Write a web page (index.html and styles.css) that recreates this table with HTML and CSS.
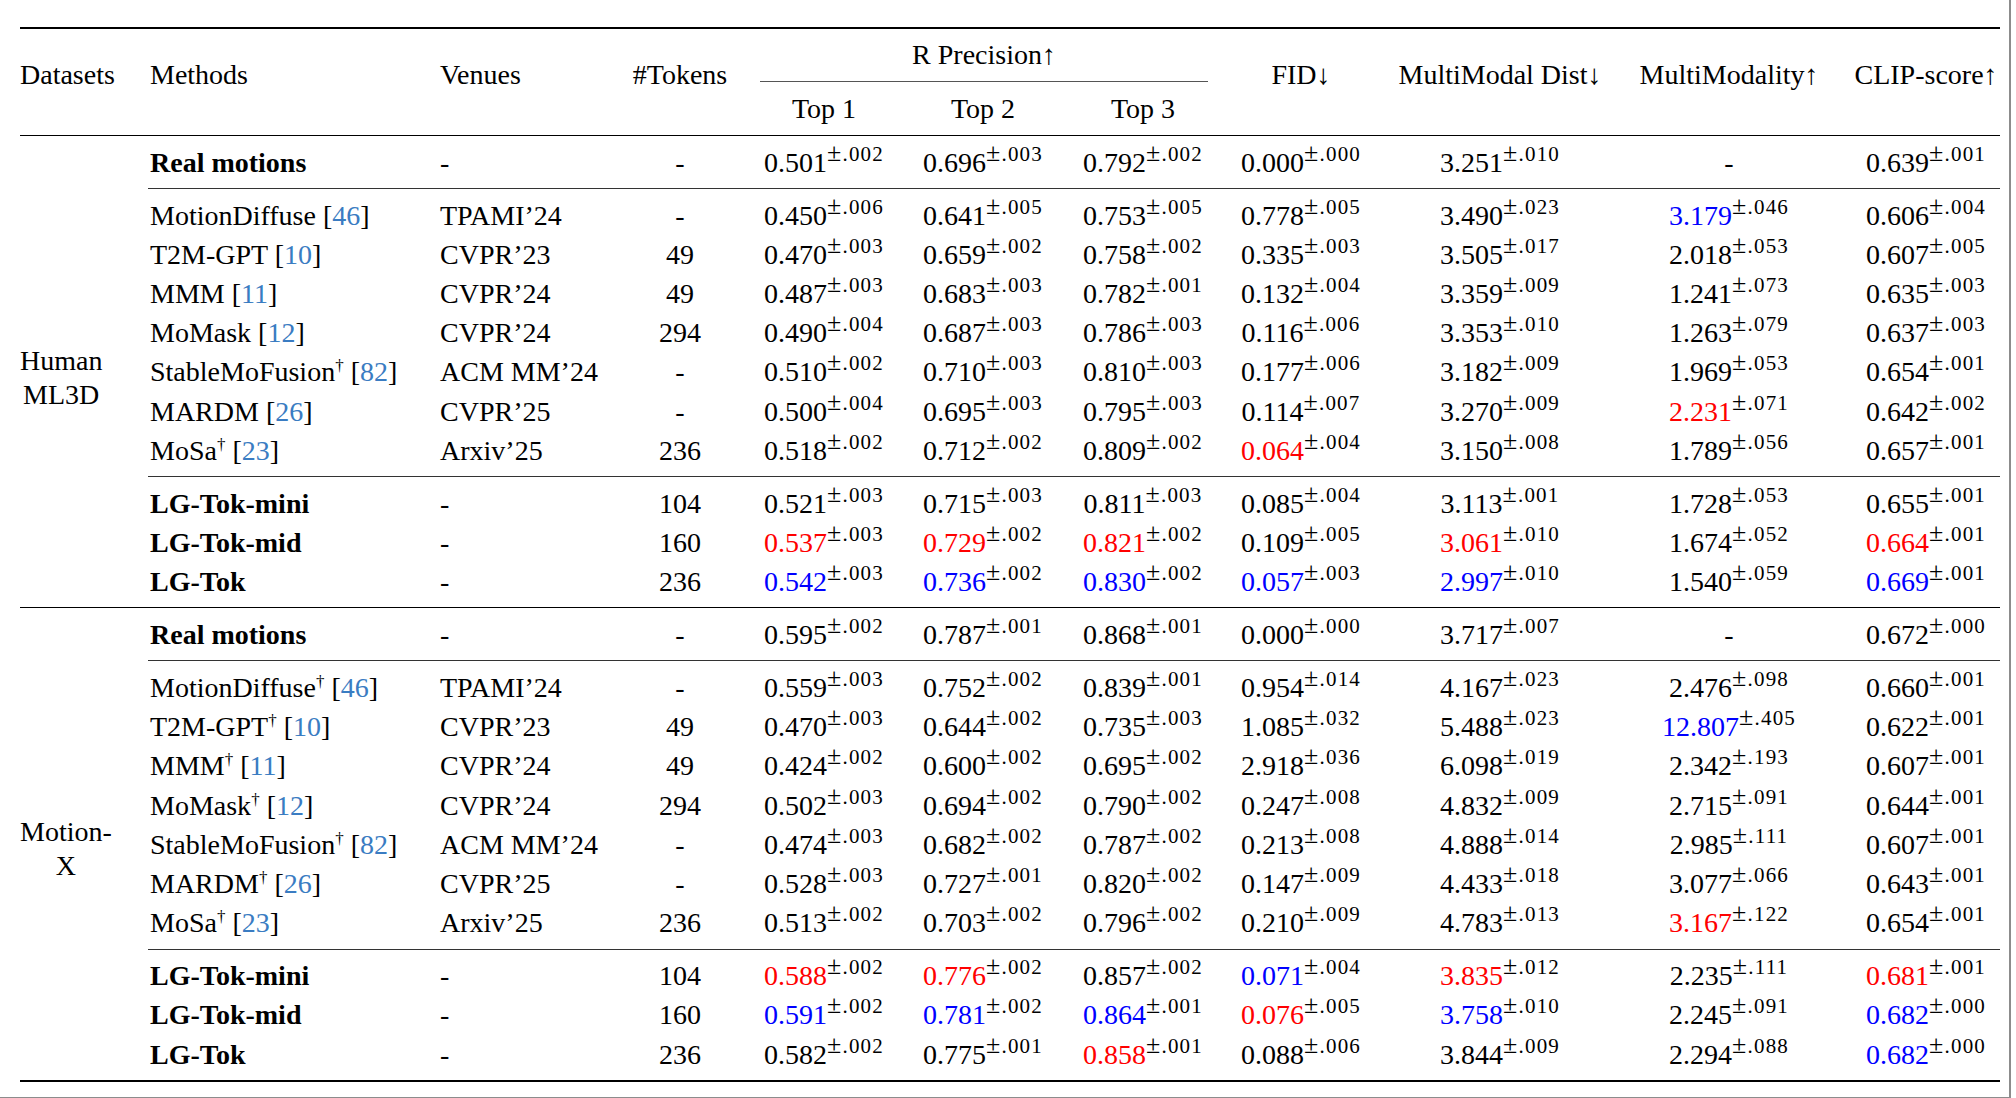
FILE: index.html
```html
<!DOCTYPE html>
<html lang="en">
<head>
<meta charset="utf-8">
<title>Results table</title>
<link rel="stylesheet" href="styles.css">
</head>
<body>
<div class="page">
<table class="tbl">
<colgroup>
<col class="w1"><col class="w2"><col class="w3"><col class="w4"><col class="w5"><col class="w6"><col class="w7"><col class="w8"><col class="w9"><col class="w10"><col class="w11">
</colgroup>
<thead>
<tr>
<th rowspan="2" class="hl">Datasets</th>
<th rowspan="2" class="hl pl">Methods</th>
<th rowspan="2" class="hl pl">Venues</th>
<th rowspan="2" class="hc">#Tokens</th>
<th colspan="3" class="grp"><div class="grp-label">R Precision↑</div></th>
<th rowspan="2" class="hc">FID↓</th>
<th rowspan="2" class="hc">MultiModal Dist↓</th>
<th rowspan="2" class="hc">MultiModality↑</th>
<th rowspan="2" class="hc">CLIP-score↑</th>
</tr>
<tr>
<th class="sub">Top 1</th><th class="sub">Top 2</th><th class="sub">Top 3</th>
</tr>
</thead>
<tbody>
<tr class="first last rule"><td rowspan="11" class="ds"><div class="dsn">Human<br>ML3D</div></td><td class="m bold">Real motions</td><td class="m">-</td><td>-</td><td>0.501<sup><span class="pm">±</span>.002</sup></td><td>0.696<sup><span class="pm">±</span>.003</sup></td><td>0.792<sup><span class="pm">±</span>.002</sup></td><td>0.000<sup><span class="pm">±</span>.000</sup></td><td>3.251<sup><span class="pm">±</span>.010</sup></td><td>-</td><td>0.639<sup><span class="pm">±</span>.001</sup></td></tr>
<tr class="first"><td class="m">MotionDiffuse [<span class="cite">46</span>]</td><td class="m">TPAMI’24</td><td>-</td><td>0.450<sup><span class="pm">±</span>.006</sup></td><td>0.641<sup><span class="pm">±</span>.005</sup></td><td>0.753<sup><span class="pm">±</span>.005</sup></td><td>0.778<sup><span class="pm">±</span>.005</sup></td><td>3.490<sup><span class="pm">±</span>.023</sup></td><td><span class="b">3.179</span><sup><span class="pm">±</span>.046</sup></td><td>0.606<sup><span class="pm">±</span>.004</sup></td></tr>
<tr><td class="m">T2M-GPT [<span class="cite">10</span>]</td><td class="m">CVPR’23</td><td>49</td><td>0.470<sup><span class="pm">±</span>.003</sup></td><td>0.659<sup><span class="pm">±</span>.002</sup></td><td>0.758<sup><span class="pm">±</span>.002</sup></td><td>0.335<sup><span class="pm">±</span>.003</sup></td><td>3.505<sup><span class="pm">±</span>.017</sup></td><td>2.018<sup><span class="pm">±</span>.053</sup></td><td>0.607<sup><span class="pm">±</span>.005</sup></td></tr>
<tr><td class="m">MMM [<span class="cite">11</span>]</td><td class="m">CVPR’24</td><td>49</td><td>0.487<sup><span class="pm">±</span>.003</sup></td><td>0.683<sup><span class="pm">±</span>.003</sup></td><td>0.782<sup><span class="pm">±</span>.001</sup></td><td>0.132<sup><span class="pm">±</span>.004</sup></td><td>3.359<sup><span class="pm">±</span>.009</sup></td><td>1.241<sup><span class="pm">±</span>.073</sup></td><td>0.635<sup><span class="pm">±</span>.003</sup></td></tr>
<tr><td class="m">MoMask [<span class="cite">12</span>]</td><td class="m">CVPR’24</td><td>294</td><td>0.490<sup><span class="pm">±</span>.004</sup></td><td>0.687<sup><span class="pm">±</span>.003</sup></td><td>0.786<sup><span class="pm">±</span>.003</sup></td><td>0.116<sup><span class="pm">±</span>.006</sup></td><td>3.353<sup><span class="pm">±</span>.010</sup></td><td>1.263<sup><span class="pm">±</span>.079</sup></td><td>0.637<sup><span class="pm">±</span>.003</sup></td></tr>
<tr><td class="m">StableMoFusion<sup class="dg">†</sup> [<span class="cite">82</span>]</td><td class="m">ACM MM’24</td><td>-</td><td>0.510<sup><span class="pm">±</span>.002</sup></td><td>0.710<sup><span class="pm">±</span>.003</sup></td><td>0.810<sup><span class="pm">±</span>.003</sup></td><td>0.177<sup><span class="pm">±</span>.006</sup></td><td>3.182<sup><span class="pm">±</span>.009</sup></td><td>1.969<sup><span class="pm">±</span>.053</sup></td><td>0.654<sup><span class="pm">±</span>.001</sup></td></tr>
<tr><td class="m">MARDM [<span class="cite">26</span>]</td><td class="m">CVPR’25</td><td>-</td><td>0.500<sup><span class="pm">±</span>.004</sup></td><td>0.695<sup><span class="pm">±</span>.003</sup></td><td>0.795<sup><span class="pm">±</span>.003</sup></td><td>0.114<sup><span class="pm">±</span>.007</sup></td><td>3.270<sup><span class="pm">±</span>.009</sup></td><td><span class="r">2.231</span><sup><span class="pm">±</span>.071</sup></td><td>0.642<sup><span class="pm">±</span>.002</sup></td></tr>
<tr class="last rule"><td class="m">MoSa<sup class="dg">†</sup> [<span class="cite">23</span>]</td><td class="m">Arxiv’25</td><td>236</td><td>0.518<sup><span class="pm">±</span>.002</sup></td><td>0.712<sup><span class="pm">±</span>.002</sup></td><td>0.809<sup><span class="pm">±</span>.002</sup></td><td><span class="r">0.064</span><sup><span class="pm">±</span>.004</sup></td><td>3.150<sup><span class="pm">±</span>.008</sup></td><td>1.789<sup><span class="pm">±</span>.056</sup></td><td>0.657<sup><span class="pm">±</span>.001</sup></td></tr>
<tr class="first"><td class="m bold">LG-Tok-mini</td><td class="m">-</td><td>104</td><td>0.521<sup><span class="pm">±</span>.003</sup></td><td>0.715<sup><span class="pm">±</span>.003</sup></td><td>0.811<sup><span class="pm">±</span>.003</sup></td><td>0.085<sup><span class="pm">±</span>.004</sup></td><td>3.113<sup><span class="pm">±</span>.001</sup></td><td>1.728<sup><span class="pm">±</span>.053</sup></td><td>0.655<sup><span class="pm">±</span>.001</sup></td></tr>
<tr><td class="m bold">LG-Tok-mid</td><td class="m">-</td><td>160</td><td><span class="r">0.537</span><sup><span class="pm">±</span>.003</sup></td><td><span class="r">0.729</span><sup><span class="pm">±</span>.002</sup></td><td><span class="r">0.821</span><sup><span class="pm">±</span>.002</sup></td><td>0.109<sup><span class="pm">±</span>.005</sup></td><td><span class="r">3.061</span><sup><span class="pm">±</span>.010</sup></td><td>1.674<sup><span class="pm">±</span>.052</sup></td><td><span class="r">0.664</span><sup><span class="pm">±</span>.001</sup></td></tr>
<tr class="last bend"><td class="m bold">LG-Tok</td><td class="m">-</td><td>236</td><td><span class="b">0.542</span><sup><span class="pm">±</span>.003</sup></td><td><span class="b">0.736</span><sup><span class="pm">±</span>.002</sup></td><td><span class="b">0.830</span><sup><span class="pm">±</span>.002</sup></td><td><span class="b">0.057</span><sup><span class="pm">±</span>.003</sup></td><td><span class="b">2.997</span><sup><span class="pm">±</span>.010</sup></td><td>1.540<sup><span class="pm">±</span>.059</sup></td><td><span class="b">0.669</span><sup><span class="pm">±</span>.001</sup></td></tr>
</tbody>
<tbody class="final">
<tr class="first last rule"><td rowspan="11" class="ds"><div class="dsn">Motion-<br>X</div></td><td class="m bold">Real motions</td><td class="m">-</td><td>-</td><td>0.595<sup><span class="pm">±</span>.002</sup></td><td>0.787<sup><span class="pm">±</span>.001</sup></td><td>0.868<sup><span class="pm">±</span>.001</sup></td><td>0.000<sup><span class="pm">±</span>.000</sup></td><td>3.717<sup><span class="pm">±</span>.007</sup></td><td>-</td><td>0.672<sup><span class="pm">±</span>.000</sup></td></tr>
<tr class="first"><td class="m">MotionDiffuse<sup class="dg">†</sup> [<span class="cite">46</span>]</td><td class="m">TPAMI’24</td><td>-</td><td>0.559<sup><span class="pm">±</span>.003</sup></td><td>0.752<sup><span class="pm">±</span>.002</sup></td><td>0.839<sup><span class="pm">±</span>.001</sup></td><td>0.954<sup><span class="pm">±</span>.014</sup></td><td>4.167<sup><span class="pm">±</span>.023</sup></td><td>2.476<sup><span class="pm">±</span>.098</sup></td><td>0.660<sup><span class="pm">±</span>.001</sup></td></tr>
<tr><td class="m">T2M-GPT<sup class="dg">†</sup> [<span class="cite">10</span>]</td><td class="m">CVPR’23</td><td>49</td><td>0.470<sup><span class="pm">±</span>.003</sup></td><td>0.644<sup><span class="pm">±</span>.002</sup></td><td>0.735<sup><span class="pm">±</span>.003</sup></td><td>1.085<sup><span class="pm">±</span>.032</sup></td><td>5.488<sup><span class="pm">±</span>.023</sup></td><td><span class="b">12.807</span><sup><span class="pm">±</span>.405</sup></td><td>0.622<sup><span class="pm">±</span>.001</sup></td></tr>
<tr><td class="m">MMM<sup class="dg">†</sup> [<span class="cite">11</span>]</td><td class="m">CVPR’24</td><td>49</td><td>0.424<sup><span class="pm">±</span>.002</sup></td><td>0.600<sup><span class="pm">±</span>.002</sup></td><td>0.695<sup><span class="pm">±</span>.002</sup></td><td>2.918<sup><span class="pm">±</span>.036</sup></td><td>6.098<sup><span class="pm">±</span>.019</sup></td><td>2.342<sup><span class="pm">±</span>.193</sup></td><td>0.607<sup><span class="pm">±</span>.001</sup></td></tr>
<tr><td class="m">MoMask<sup class="dg">†</sup> [<span class="cite">12</span>]</td><td class="m">CVPR’24</td><td>294</td><td>0.502<sup><span class="pm">±</span>.003</sup></td><td>0.694<sup><span class="pm">±</span>.002</sup></td><td>0.790<sup><span class="pm">±</span>.002</sup></td><td>0.247<sup><span class="pm">±</span>.008</sup></td><td>4.832<sup><span class="pm">±</span>.009</sup></td><td>2.715<sup><span class="pm">±</span>.091</sup></td><td>0.644<sup><span class="pm">±</span>.001</sup></td></tr>
<tr><td class="m">StableMoFusion<sup class="dg">†</sup> [<span class="cite">82</span>]</td><td class="m">ACM MM’24</td><td>-</td><td>0.474<sup><span class="pm">±</span>.003</sup></td><td>0.682<sup><span class="pm">±</span>.002</sup></td><td>0.787<sup><span class="pm">±</span>.002</sup></td><td>0.213<sup><span class="pm">±</span>.008</sup></td><td>4.888<sup><span class="pm">±</span>.014</sup></td><td>2.985<sup><span class="pm">±</span>.111</sup></td><td>0.607<sup><span class="pm">±</span>.001</sup></td></tr>
<tr><td class="m">MARDM<sup class="dg">†</sup> [<span class="cite">26</span>]</td><td class="m">CVPR’25</td><td>-</td><td>0.528<sup><span class="pm">±</span>.003</sup></td><td>0.727<sup><span class="pm">±</span>.001</sup></td><td>0.820<sup><span class="pm">±</span>.002</sup></td><td>0.147<sup><span class="pm">±</span>.009</sup></td><td>4.433<sup><span class="pm">±</span>.018</sup></td><td>3.077<sup><span class="pm">±</span>.066</sup></td><td>0.643<sup><span class="pm">±</span>.001</sup></td></tr>
<tr class="last rule"><td class="m">MoSa<sup class="dg">†</sup> [<span class="cite">23</span>]</td><td class="m">Arxiv’25</td><td>236</td><td>0.513<sup><span class="pm">±</span>.002</sup></td><td>0.703<sup><span class="pm">±</span>.002</sup></td><td>0.796<sup><span class="pm">±</span>.002</sup></td><td>0.210<sup><span class="pm">±</span>.009</sup></td><td>4.783<sup><span class="pm">±</span>.013</sup></td><td><span class="r">3.167</span><sup><span class="pm">±</span>.122</sup></td><td>0.654<sup><span class="pm">±</span>.001</sup></td></tr>
<tr class="first"><td class="m bold">LG-Tok-mini</td><td class="m">-</td><td>104</td><td><span class="r">0.588</span><sup><span class="pm">±</span>.002</sup></td><td><span class="r">0.776</span><sup><span class="pm">±</span>.002</sup></td><td>0.857<sup><span class="pm">±</span>.002</sup></td><td><span class="b">0.071</span><sup><span class="pm">±</span>.004</sup></td><td><span class="r">3.835</span><sup><span class="pm">±</span>.012</sup></td><td>2.235<sup><span class="pm">±</span>.111</sup></td><td><span class="r">0.681</span><sup><span class="pm">±</span>.001</sup></td></tr>
<tr><td class="m bold">LG-Tok-mid</td><td class="m">-</td><td>160</td><td><span class="b">0.591</span><sup><span class="pm">±</span>.002</sup></td><td><span class="b">0.781</span><sup><span class="pm">±</span>.002</sup></td><td><span class="b">0.864</span><sup><span class="pm">±</span>.001</sup></td><td><span class="r">0.076</span><sup><span class="pm">±</span>.005</sup></td><td><span class="b">3.758</span><sup><span class="pm">±</span>.010</sup></td><td>2.245<sup><span class="pm">±</span>.091</sup></td><td><span class="b">0.682</span><sup><span class="pm">±</span>.000</sup></td></tr>
<tr class="last bend"><td class="m bold">LG-Tok</td><td class="m">-</td><td>236</td><td>0.582<sup><span class="pm">±</span>.002</sup></td><td>0.775<sup><span class="pm">±</span>.001</sup></td><td><span class="r">0.858</span><sup><span class="pm">±</span>.001</sup></td><td>0.088<sup><span class="pm">±</span>.006</sup></td><td>3.844<sup><span class="pm">±</span>.009</sup></td><td>2.294<sup><span class="pm">±</span>.088</sup></td><td><span class="b">0.682</span><sup><span class="pm">±</span>.000</sup></td></tr>
</tbody>
</table>
</div>
</body>
</html>
```
FILE: styles.css
```css
html, body {
  margin: 0;
  padding: 0;
  background: #ffffff;
}

body {
  font-family: "Liberation Serif", "Times New Roman", serif;
  color: #000;
  overflow: hidden;
}

.page {
  box-sizing: border-box;
  width: 2011px;
  height: 1098px;
  padding: 27px 0 0 20px;
  border-right: 2px solid #8c8c8c;
  border-bottom: 1px solid #8c8c8c;
}

.tbl {
  border-collapse: separate;
  border-spacing: 0;
  table-layout: fixed;
  width: 1980px;
  font-size: 28px;
}

.w1 { width: 128px; }
.w2 { width: 290px; }
.w3 { width: 162px; }
.w4 { width: 160px; }
.w5 { width: 128px; }
.w6 { width: 190px; }
.w7 { width: 130px; }
.w8 { width: 186px; }
.w9 { width: 212px; }
.w10 { width: 246px; }
.w11 { width: 148px; }

/* header */
.tbl th {
  font-weight: 400;
  line-height: 36px;
  padding: 0;
  vertical-align: top;
  white-space: nowrap;
}

.tbl thead tr:first-child th {
  border-top: 2px solid #000;
}

.tbl th.hl,
.tbl th.hc {
  padding-top: 27.5px;
  padding-bottom: 42.5px;
  border-bottom: 1px solid #000;
}

.tbl th.hl { text-align: left; }
.tbl th.hc { text-align: center; }
.tbl th.pl { padding-left: 2px; }

.tbl th.grp { text-align: center; }

.grp-label {
  padding: 7.5px 0 8.5px;
  border-bottom: 1px solid #555;
}

.tbl th.sub {
  text-align: center;
  padding-top: 9px;
  padding-bottom: 8px;
  border-bottom: 1px solid #000;
}

/* body */
.tbl td {
  padding: 0 0 3.2px;
  line-height: 36px;
  vertical-align: top;
  text-align: center;
  white-space: nowrap;
}

.tbl td.m {
  text-align: left;
  padding-left: 2px;
}

.tbl tr.first > td { padding-top: 8.6px; }
.tbl tr.last > td { padding-bottom: 7.4px; }

.tbl tr.rule > td:not(.ds) { border-bottom: 1px solid #333; }

.tbl tr.bend > td,
.tbl td.ds { border-bottom: 1px solid #000; }

.tbl tbody.final tr.bend > td,
.tbl tbody.final td.ds { border-bottom-width: 2px; }

.tbl tbody tr > td.ds {
  padding: 13px 0 0;
  text-align: left;
  vertical-align: middle;
}

.tbl tbody.final tr > td.ds {
  padding-top: 11.6px;
}

.dsn {
  display: inline-block;
  text-align: center;
  line-height: 34px;
}

.bold { font-weight: 700; }

.cite { color: #3a7cc2; }
.r { color: #ff0000; }
.b { color: #0000ff; }

.tbl sup {
  font-size: 21px;
  letter-spacing: 1.2px;
  line-height: 0;
  vertical-align: 11px;
}

.tbl sup .pm {
  font-size: 26px;
}

.tbl sup.dg {
  font-size: 17px;
  letter-spacing: 0;
  vertical-align: 10px;
}
```
